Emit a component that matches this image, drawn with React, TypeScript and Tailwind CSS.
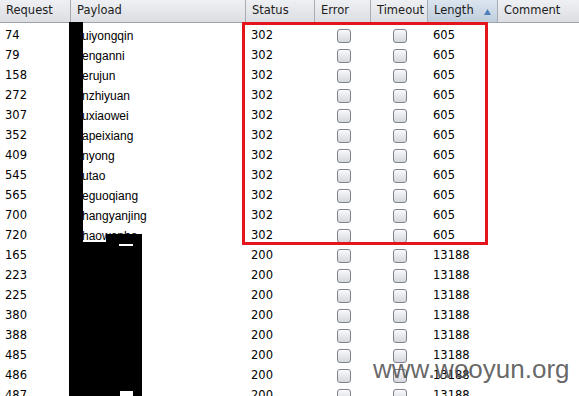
import React from "react";

type Row = { req: string; payload: string; status: string; length: string };

const hits: [string, string][] = [
  ["74", "uiyongqin"],
  ["79", "enganni"],
  ["158", "erujun"],
  ["272", "nzhiyuan"],
  ["307", "uxiaowei"],
  ["352", "apeixiang"],
  ["409", "nyong"],
  ["545", "utao"],
  ["565", "eguoqiang"],
  ["700", "hangyanjing"],
  ["720", "haowenbo"],
];

const misses = ["165", "223", "225", "380", "388", "485", "486", "487"];

const rows: Row[] = [
  ...hits.map(([req, payload]) => ({ req, payload, status: "302", length: "605" })),
  ...misses.map((req) => ({ req, payload: "", status: "200", length: "13188" })),
];

const cols = "grid grid-cols-[70px_175px_69px_56px_57px_70px_1fr]";

function Check() {
  return (
    <div className="w-[14px] h-[14px] rounded-[3px] border border-[#7d828c] bg-gradient-to-b from-[#f7f8fa] to-[#d5d8de] shadow-[inset_0_1px_0_#ffffff]" />
  );
}

function HeadCell({ label, first, active }: { label: string; first?: boolean; active?: boolean }) {
  return (
    <div
      className={`relative flex items-center pl-[6px] ${first ? "" : "border-l border-[#a7abb2]"} ${
        active ? "bg-gradient-to-b from-[#dbe5f0] to-[#bfcddc]" : ""
      }`}
    >
      {label}
      {active && (
        <svg className="absolute right-[6px] top-[9px]" width="7" height="6" viewBox="0 0 7 6">
          <path d="M3.5 0 L7 6 L0 6 Z" fill="#4f7fbb" />
        </svg>
      )}
    </div>
  );
}

export default function App() {
  return (
    <div
      className="relative w-[579px] h-[396px] overflow-hidden bg-white text-[11.5px] text-black"
      style={{ fontFamily: '"DejaVu Sans", sans-serif' }}
    >
      <div className={`${cols} h-[23px] border-b border-[#9ea2a9] bg-gradient-to-b from-[#eef0f3] to-[#dcdee3] text-[#1c1c1c]`}>
        <HeadCell label="Request" first />
        <HeadCell label="Payload" />
        <HeadCell label="Status" />
        <HeadCell label="Error" />
        <HeadCell label="Timeout" />
        <HeadCell label="Length" active />
        <HeadCell label="Comment" />
      </div>

      <div className="pt-[3px]">
        {rows.map((r) => (
          <div key={r.req} className={`${cols} h-[20px] items-center`}>
            <div className="pl-[5px]">{r.req}</div>
            <div className="pl-[12px]" style={{ fontFamily: '"Liberation Sans", sans-serif', fontSize: 12 }}>
              {r.payload}
            </div>
            <div className="pl-[6px]">{r.status}</div>
            <div className="flex justify-center pl-[3px]">
              <Check />
            </div>
            <div className="flex justify-center pl-[2px]">
              <Check />
            </div>
            <div className="pl-[6px]">{r.length}</div>
            <div />
          </div>
        ))}
      </div>

      {/* redaction */}
      <div className="absolute left-[69px] top-[22px] w-[14px] h-[220px] bg-black" />
      <div className="absolute left-[106px] top-[234px] w-[36px] h-[162px] bg-black" />
      <div className="absolute left-[69px] top-[242px] w-[73px] h-[154px] bg-black" />
      <div className="absolute left-[119px] top-[244px] w-[14px] h-[2px] bg-white" />
      <div className="absolute left-[120px] top-[391px] w-[13px] h-[5px] bg-white" />

      {/* highlight box */}
      <div className="absolute left-[242px] top-[22px] w-[246px] h-[223px] border-[3px] border-[#e3141c]" />

      {/* watermark */}
      <div
        className="absolute left-[373px] top-[356px] text-[26px] leading-none text-[#4d4d4d]/85"
        style={{ fontFamily: '"Liberation Sans", sans-serif' }}
      >
        www.wooyun.org
      </div>
    </div>
  );
}
